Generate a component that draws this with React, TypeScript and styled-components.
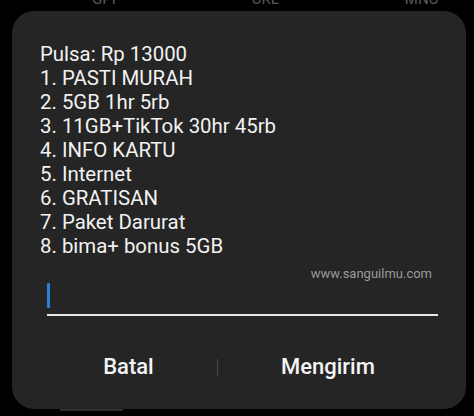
import React from "react";
import styled, { createGlobalStyle } from "styled-components";

const menu = [
    "Pulsa: Rp 13000",
    "1. PASTI MURAH",
    "2. 5GB 1hr 5rb",
    "3. 11GB+TikTok 30hr 45rb",
    "4. INFO KARTU",
    "5. Internet",
    "6. GRATISAN",
    "7. Paket Darurat",
    "8. bima+ bonus 5GB",
];

const App = () => {
    return (
        <>
            <GlobalStyle />
            <Screen>
                <Tabs>
                    <Tab $left={92}>GPI</Tab>
                    <Tab $left={228}>URL</Tab>
                    <Tab $left={354}>MNO</Tab>
                </Tabs>
                <Dialog>
                    <Message>
                        {menu.map((line) => (
                            <Line key={line}>{line}</Line>
                        ))}
                    </Message>
                    <Watermark>www.sanguilmu.com</Watermark>
                    <InputField>
                        <Caret />
                    </InputField>
                    <Actions>
                        <ActionButton>Batal</ActionButton>
                        <Divider />
                        <ActionButton>Mengirim</ActionButton>
                    </Actions>
                </Dialog>
                <HomeBar />
            </Screen>
        </>
    );
};

export default App;

const GlobalStyle = createGlobalStyle`
    html, body {
        margin: 0;
        padding: 0;
        background: #000;
    }
    body {
        font-family: Roboto, "Liberation Sans", sans-serif;
    }
`;

const Screen = styled.div`
    width: 474px;
    height: 416px;
    overflow: hidden;
    background: #000;
`;

// tab labels of the screen behind, mostly hidden above the top edge
const Tabs = styled.div`
    height: 11px;
    display: flex;
    overflow: hidden;
`;

const Tab = styled.span<{ $left: number }>`
    margin-left: ${(p) => p.$left}px;
    margin-top: -8px;
    margin-right: -${(p) => p.$left}px;
    font-size: 15px;
    line-height: 15px;
    color: #5a5a5a;
`;

const Dialog = styled.div`
    margin-left: 12px;
    width: 454px;
    height: 398px;
    box-sizing: border-box;
    border-radius: 22px;
    background: #252525;
    padding: 31px 28px 0 28px;
    display: flex;
    flex-direction: column;
`;

const Message = styled.div`
    display: flex;
    flex-direction: column;
`;

const Line = styled.div`
    font-size: 20.4px;
    line-height: 24px;
    color: #f2f2f2;
`;

const Watermark = styled.div`
    margin-top: 8px;
    align-self: flex-end;
    margin-right: 6px;
    font-size: 13px;
    line-height: 16px;
    color: #9a9a9a;
`;

const InputField = styled.div`
    margin: 1px 0 0 7px;
    height: 31px;
    border-bottom: 2px solid #e8e8e8;
    display: flex;
    align-items: flex-start;
`;

const Caret = styled.span`
    width: 3px;
    height: 25px;
    background: #2f80d8;
    border-radius: 1px;
`;

const Actions = styled.div`
    margin-top: 38px;
    display: flex;
    align-items: center;
`;

const ActionButton = styled.div`
    flex: 1 1 auto;
    text-align: center;
    font-size: 22px;
    line-height: 26px;
    font-weight: 500;
    color: #f4f4f4;
`;

const Divider = styled.div`
    width: 1px;
    height: 17px;
    background: #4a4a4a;
`;

const HomeBar = styled.div`
    margin-left: 60px;
    width: 63px;
    height: 2px;
    background: #2c2c2c;
`;
